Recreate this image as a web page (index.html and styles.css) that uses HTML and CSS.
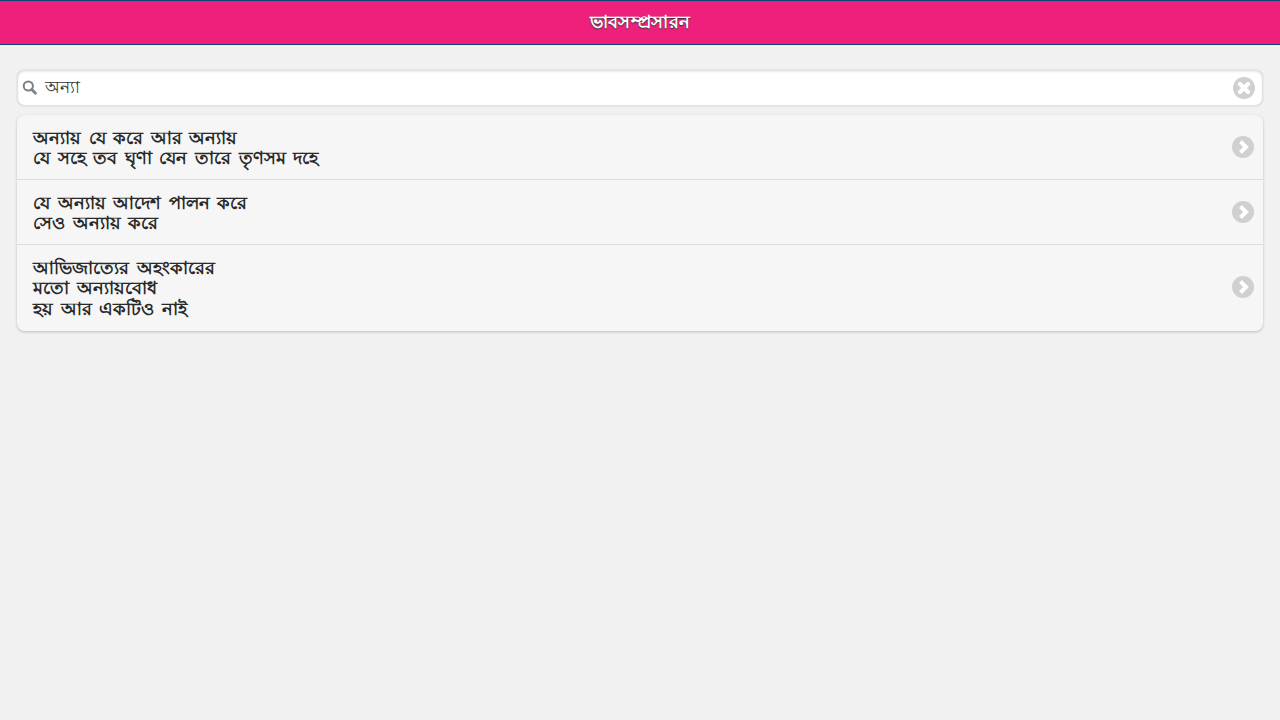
FILE: index.html
```html
<!DOCTYPE html>
<html lang="bn">
<head>
<meta charset="utf-8">
<title>ভাবসম্প্রসারন</title>
<link rel="stylesheet" href="styles.css">
</head>
<body>
<header class="bar"><h1 class="title">ভাবসম্প্রসারন</h1></header>
<main class="content">
  <div class="search">
    <svg class="search-icon" width="16" height="16" viewBox="0 0 16 16"><circle cx="6.3" cy="6" r="4.600" fill="none" stroke="#808080" stroke-width="2"/><path d="M9.800 9.500 13.500 13.200" stroke="#808080" stroke-width="2.800" stroke-linecap="round"/></svg>
    <span class="search-text">অন্যা</span>
    <svg class="clear" width="24" height="24" viewBox="0 0 24 24"><circle cx="12" cy="12" r="11" fill="#d0d0d0"/><path d="M8 8l8 8M16 8l-8 8" stroke="#fff" stroke-width="4.200" stroke-linecap="round"/></svg>
  </div>
  <ul class="list">
    <li class="row"><p class="text">অন্যায় যে করে আর অন্যায়<br>যে সহে তব ঘৃণা যেন তারে তৃণসম দহে</p><svg class="chev" width="24" height="24" viewBox="0 0 24 24"><circle cx="12" cy="12" r="11" fill="#d0d0d0"/><path d="M9.500 6.500 15 12l-5.500 5.500" fill="none" stroke="#fff" stroke-width="4"/></svg></li>
    <li class="row"><p class="text">যে অন্যায় আদেশ পালন করে<br>সেও অন্যায় করে</p><svg class="chev" width="24" height="24" viewBox="0 0 24 24"><circle cx="12" cy="12" r="11" fill="#d0d0d0"/><path d="M9.500 6.500 15 12l-5.500 5.500" fill="none" stroke="#fff" stroke-width="4"/></svg></li>
    <li class="row"><p class="text">আভিজাত্যের অহংকারের<br>মতো অন্যায়বোধ<br>হয় আর একটিও নাই</p><svg class="chev" width="24" height="24" viewBox="0 0 24 24"><circle cx="12" cy="12" r="11" fill="#d0d0d0"/><path d="M9.500 6.500 15 12l-5.500 5.500" fill="none" stroke="#fff" stroke-width="4"/></svg></li>
  </ul>
</main>
</body>
</html>
```
FILE: styles.css
```css
* { box-sizing: border-box; }
html, body { margin: 0; height: 100%; }
body { background: #f1f1f1; font-family: "Noto Sans", "Liberation Sans", sans-serif; color: #2a2a2a; overflow: hidden; }
.bar { height: 45px; background: #ee207b; border-top: 1px solid #12407a; border-bottom: 1px solid #12407a; display: flex; align-items: center; justify-content: center; padding-bottom: 3px; }
.title { margin: 0; font-size: 18px; font-weight: 700; color: #fff; line-height: 24px; letter-spacing: .4px; text-shadow: 0 1px 1px #333; }
.content { padding: 25px 17px 0 17px; }
.search { height: 36px; background: #fff; border-radius: 8px; border: 1px solid #e2e2e2; box-shadow: 0 0 2px rgba(0,0,0,.16), inset 0 1px 2px rgba(0,0,0,.08); display: flex; align-items: center; padding: 0 6px 0 4px; }
.search-icon { flex: none; }
.search-text { flex: 1; margin-left: 7px; font-size: 17px; color: #333; }
.clear { flex: none; }
.list { list-style: none; margin: 9px 0 0; padding: 0; background: #f6f6f6; border-radius: 8px; box-shadow: 0 1px 3px rgba(0,0,0,.22); }
.row { display: flex; align-items: center; justify-content: space-between; padding: 11.500px 8px 11.500px 16.300px; border-top: 1px solid #ddd; }
.row:first-child { border-top: 0; }
.row:last-child { padding-bottom: 12.500px; }
.text { margin: 0; font-size: 17.500px; font-weight: 700; line-height: 20.500px; word-spacing: 3px; }
.chev { flex: none; }
```
